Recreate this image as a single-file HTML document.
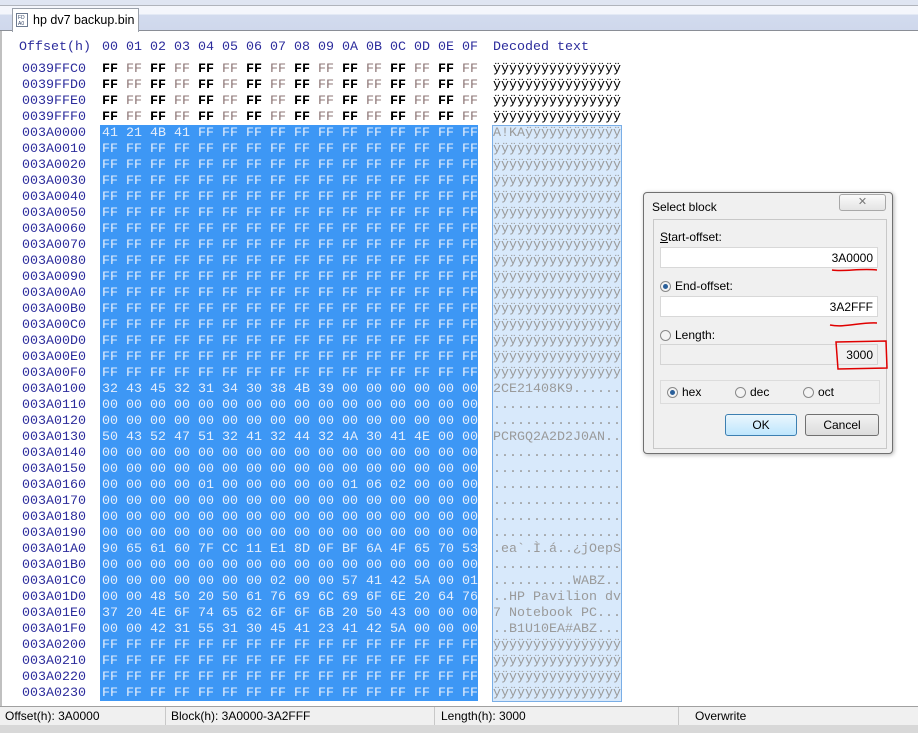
<!DOCTYPE html>
<html><head><meta charset="utf-8"><style>
body{margin:0;width:918px;height:733px;overflow:hidden;background:#fff;font-family:"Liberation Sans",sans-serif;position:relative}
.mono{font-family:"Liberation Mono",monospace;font-size:13.33px;position:absolute;white-space:pre;line-height:16px}
#top{position:absolute;left:0;top:0;width:918px;height:5px;background:#dfe5f2;border-bottom:1px solid #b0b4bc}
#strip{position:absolute;left:0;top:6px;width:918px;height:24px;background:linear-gradient(#f4f6fc 0,#f4f6fc 8px,#d2dbee 9px,#cfd8ec 100%);border-bottom:1px solid #8a8e96}
#tab{position:absolute;left:12px;top:8px;width:125px;height:23px;background:#fff;border:1px solid #9aa0aa;border-bottom:none;font-size:12.5px;white-space:nowrap}
#tab span{position:absolute;left:20px;top:4px}
#sel{position:absolute;left:100px;top:125px;width:378px;height:576px;background:#3d97f5}
#dsel{position:absolute;left:492px;top:125px;width:128px;height:575px;background:#d8e9fb;border:1px solid #7aaee6}
#status{position:absolute;left:0;top:706px;width:918px;height:19px;background:#f0f0f0;border-top:1px solid #a0a0a0;font-size:12px}
#status div{position:absolute;top:0;height:19px;line-height:19px;border-right:1px solid #c8c8c8;padding-left:5px}
#bot{position:absolute;left:0;top:725px;width:918px;height:8px;background:#d8d8d8}
#dlg{position:absolute;left:643px;top:192px;width:248px;height:260px;background:#f0f0f0;border:1px solid #707070;border-radius:4px;box-shadow:1px 1px 4px rgba(0,0,0,.3);font-size:12px}
#dlg .ttl{position:absolute;left:8px;top:7px}
#dlg .x{position:absolute;left:195px;top:1px;width:45px;height:15px;border:1px solid #a8a8a8;border-radius:3px;background:linear-gradient(#fafafa,#e4e4e4);text-align:center;color:#777;font-size:11px;line-height:15px}
#dlg .in{position:absolute;left:9px;top:26px;width:232px;height:228px;border:1px solid #c8c8c8;background:#f0f0f0}
.fld{position:absolute;left:6px;height:21px;background:#fff;border:1px solid #d8d8d8;text-align:right;line-height:21px;padding-right:4px;box-sizing:border-box;width:218px}
.lbl{position:absolute;left:6px}
.rad{display:inline-block;width:11px;height:11px;border-radius:50%;border:1px solid #8a8a8a;background:#f4f4f4;vertical-align:-2px;margin-right:4px;box-sizing:border-box;position:relative}
.rad.on::after{content:"";position:absolute;left:2px;top:2px;width:5px;height:5px;border-radius:50%;background:#2a5f9a}
.btn{position:absolute;height:20px;border:1px solid #707070;border-radius:3px;background:linear-gradient(#f2f2f2,#dcdcdc);text-align:center;line-height:20px}
</style></head><body>
<div id="top"></div><div id="strip"></div>
<div id="tab"><svg style="position:absolute;left:3px;top:4px" width="12" height="14"><rect x="0.5" y="0.5" width="11" height="13" fill="#fff" stroke="#6c7a90"/><text x="2" y="6" font-size="5" fill="#346">FD</text><text x="2" y="12" font-size="5" fill="#346">A0</text></svg><span>hp dv7 backup.bin</span></div>
<div style="position:absolute;left:0;top:31px;width:2px;height:675px;background:#c0c0c0"></div>
<div id="sel"></div><div id="dsel"></div>
<div id="hex"></div>
<div id="dlg">
<div class="ttl">Select block</div><div class="x">✕</div>
<div class="in">
<div class="lbl" style="top:10px"><u>S</u>tart-offset:</div>
<div class="fld" style="top:27px">3A0000</div>
<div class="lbl" style="top:59px"><span class="rad on"></span>End-offset:</div>
<div class="fld" style="top:76px">3A2FFF</div>
<div class="lbl" style="top:108px"><span class="rad"></span>Length:</div>
<div class="fld" style="top:124px;background:#f0f0f0;border-color:#d4d4d4">3000</div>
<div style="position:absolute;left:6px;top:160px;width:218px;height:22px;border:1px solid #dcdcdc;line-height:22px">
<span style="position:absolute;left:6px"><span class="rad on"></span>hex</span>
<span style="position:absolute;left:74px"><span class="rad"></span>dec</span>
<span style="position:absolute;left:142px"><span class="rad"></span>oct</span></div>
<div class="btn" style="left:71px;top:194px;width:70px;border-color:#3c7fb1;background:linear-gradient(#eaf6fd,#bee6fd)">OK</div>
<div class="btn" style="left:151px;top:194px;width:72px">Cancel</div>
</div></div>
<svg style="position:absolute;left:0;top:0" width="918" height="733" fill="none" stroke="#e00000" stroke-width="1.5">
<path d="M832 270 C845 272,860 268,877 270"/>
<path d="M830 325 C845 328,860 322,877 323"/>
<path d="M836 342 L886 341 L887 368 L838 369 Z"/>
</svg>
<div id="status"><div style="left:0;width:160px">Offset(h): 3A0000</div><div style="left:166px;width:263px">Block(h): 3A0000-3A2FFF</div><div style="left:436px;width:237px">Length(h): 3000</div><div style="left:690px;width:222px;border:none">Overwrite</div></div>
<div id="bot"></div>
<script>
var F="FF FF FF FF FF FF FF FF FF FF FF FF FF FF FF FF",Z="00 00 00 00 00 00 00 00 00 00 00 00 00 00 00 00";
var Y="ÿÿÿÿÿÿÿÿÿÿÿÿÿÿÿÿ",D="................";
var spec=[[F,Y],[F,Y],[F,Y],[F,Y],["41 21 4B 41 FF FF FF FF FF FF FF FF FF FF FF FF","A!KAÿÿÿÿÿÿÿÿÿÿÿÿ"]];
for(var i=0;i<15;i++)spec.push([F,Y]);
spec.push(["32 43 45 32 31 34 30 38 4B 39 00 00 00 00 00 00","2CE21408K9......"],[Z,D],[Z,D],
["50 43 52 47 51 32 41 32 44 32 4A 30 41 4E 00 00","PCRGQ2A2D2J0AN.."],[Z,D],[Z,D],
["00 00 00 00 01 00 00 00 00 00 01 06 02 00 00 00",D],[Z,D],[Z,D],[Z,D],
["90 65 61 60 7F CC 11 E1 8D 0F BF 6A 4F 65 70 53",".ea`.Ì.á..¿jOepS"],[Z,D],
["00 00 00 00 00 00 00 02 00 00 57 41 42 5A 00 01","..........WABZ.."],
["00 00 48 50 20 50 61 76 69 6C 69 6F 6E 20 64 76","..HP Pavilion dv"],
["37 20 4E 6F 74 65 62 6F 6F 6B 20 50 43 00 00 00","7 Notebook PC..."],
["00 00 42 31 55 31 30 45 41 23 41 42 5A 00 00 00","..B1U10EA#ABZ..."],[F,Y],[F,Y],[F,Y],[F,Y]);
var h='<div class="mono" style="left:19px;top:40px;color:#2c2c9c">Offset(h)</div>';
for(var c=0;c<16;c++)h+='<div class="mono" style="left:'+(102+24*c)+'px;top:40px;color:#2c2c9c">0'+c.toString(16).toUpperCase()+'</div>';
h+='<div class="mono" style="left:493px;top:40px;color:#2c2c9c">Decoded text</div>';
var base=0x39FFC0;
for(var r=0;r<spec.length;r++){var y=62+16*r,sel=r>=4;
var off=(base+16*r).toString(16).toUpperCase();while(off.length<8)off="0"+off;
h+='<div class="mono" style="left:22px;top:'+y+'px;color:#2c2c9c">'+off+'</div>';
var b=spec[r][0].split(" ");
for(var c=0;c<16;c++){var col=sel?"#e4eefc":(c%2?"#8c7474":"#000"),fw=(!sel&&c%2==0)?"bold":"normal";
h+='<div class="mono" style="left:'+(102+24*c)+'px;top:'+y+'px;color:'+col+';font-weight:'+fw+'">'+b[c]+'</div>';}
h+='<div class="mono" style="left:493px;top:'+y+'px;color:'+(sel?"#9a9a9a":"#000")+'">'+spec[r][1]+'</div>';}
document.getElementById("hex").innerHTML=h;
</script>
</body></html>
